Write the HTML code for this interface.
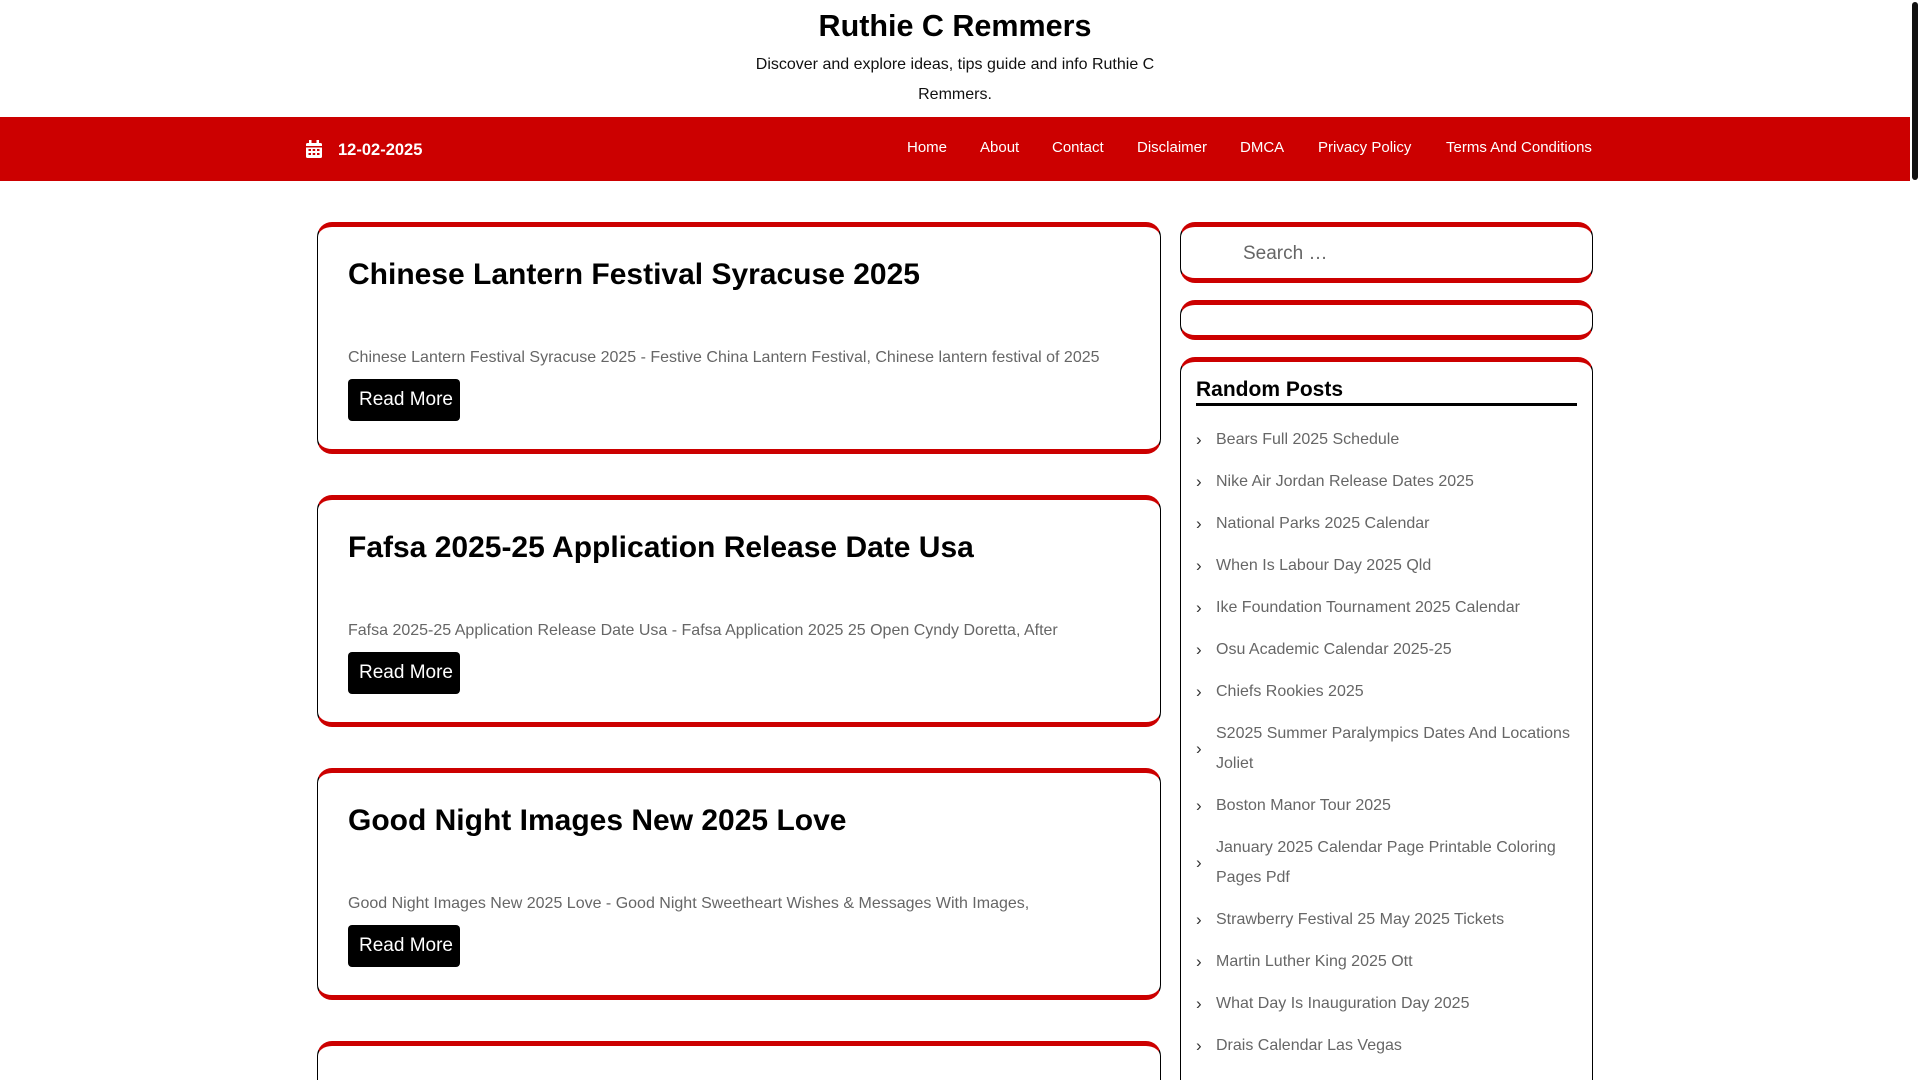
<!DOCTYPE html>
<html><head><meta charset="utf-8"><style>
*{margin:0;padding:0;box-sizing:border-box}
html,body{width:1920px;height:1080px;overflow:hidden;background:#fff;font-family:"Liberation Sans",Arial,sans-serif}
#wrap{position:relative;width:1920px;height:1080px;overflow:hidden}
.abs{position:absolute}
.title{left:0;width:1910px;top:9px;text-align:center;font-size:30.5px;font-weight:bold;color:#000}
.tag{left:740px;width:430px;top:50px;text-align:center;font-size:16px;line-height:30px;color:#111}
.nav{left:0;top:117px;width:1910px;height:64px;background:#cc0000}
.date{left:338px;top:141px;color:#fff;font-weight:bold;font-size:16.5px}
.navl{top:139px;color:#fff;font-size:15px}
.card{left:317px;width:844px;border:1px solid #000;border-top:5px solid #cc0000;border-bottom:5px solid #cc0000;border-radius:15px;background:#fff}
.card h2{position:absolute;left:30px;top:31px;font-size:30px;color:#000}
.card p{position:absolute;left:30px;top:122px;font-size:16px;color:#666;white-space:nowrap}
.card a{position:absolute;left:30px;top:152px;width:112px;height:42px;background:#000;color:#fff;border-radius:4px;font-size:19px;text-align:center;line-height:42px;text-decoration:none;padding-left:4px}
.side{left:1180px;width:413px;border:1px solid #000;border-top:5px solid #cc0000;border-bottom:5px solid #cc0000;border-radius:15px;background:#fff}
ul{list-style:none;margin-top:13px}
li{position:relative;padding:6px 0 6px 20px;font-size:16px;line-height:30px;color:#666}
li:before{content:"›";position:absolute;left:0;top:50%;transform:translateY(-50%);color:#333;font-size:17px}
</style></head><body><div id="wrap">
<div class="abs title">Ruthie C Remmers</div>
<div class="abs tag">Discover and explore ideas, tips guide and info Ruthie C Remmers.</div>
<div class="abs nav"></div>
<svg class="abs" style="left:306px;top:140px" width="16" height="18" viewBox="0 0 16 18"><rect x="0" y="3" width="16" height="15" rx="1.5" fill="#fff"/><rect x="3" y="0" width="2.5" height="5" fill="#fff"/><rect x="10.5" y="0" width="2.5" height="5" fill="#fff"/><g fill="#cc0000"><rect x="0" y="6" width="16" height="1.5"/><rect x="2.5" y="9" width="2.5" height="2"/><rect x="6.7" y="9" width="2.5" height="2"/><rect x="11" y="9" width="2.5" height="2"/><rect x="2.5" y="13" width="2.5" height="2"/><rect x="6.7" y="13" width="2.5" height="2"/><rect x="11" y="13" width="2.5" height="2"/></g></svg>
<div class="abs date">12-02-2025</div>
<div class="abs navl" style="left:907px">Home</div>
<div class="abs navl" style="left:980px">About</div>
<div class="abs navl" style="left:1052px">Contact</div>
<div class="abs navl" style="left:1137px">Disclaimer</div>
<div class="abs navl" style="left:1240px">DMCA</div>
<div class="abs navl" style="left:1318px">Privacy Policy</div>
<div class="abs navl" style="left:1446px">Terms And Conditions</div>
<div class="abs" style="left:1912px;top:2px;width:6px;height:178px;background:#111;border-radius:3px"></div>

<div class="abs card" style="top:222px;height:232px"><h2>Chinese Lantern Festival Syracuse 2025</h2><p>Chinese Lantern Festival Syracuse 2025 - Festive China Lantern Festival, Chinese lantern festival of 2025</p><a>Read More</a></div>
<div class="abs card" style="top:495px;height:232px"><h2>Fafsa 2025-25 Application Release Date Usa</h2><p>Fafsa 2025-25 Application Release Date Usa - Fafsa Application 2025 25 Open Cyndy Doretta, After</p><a>Read More</a></div>
<div class="abs card" style="top:768px;height:232px"><h2>Good Night Images New 2025 Love</h2><p>Good Night Images New 2025 Love - Good Night Sweetheart Wishes &amp; Messages With Images,</p><a>Read More</a></div>
<div class="abs card" style="top:1041px;height:39px;border-bottom:none;border-radius:15px 15px 0 0"></div>

<div class="abs side" style="top:222px;height:61px"><div class="abs" style="left:62px;top:16px;font-size:19px;color:#666">Search …</div></div>
<div class="abs side" style="top:300px;height:40px"></div>
<div class="abs side" style="top:357px;height:723px;padding:16px 15px 0 15px;border-bottom:none;border-radius:15px 15px 0 0;overflow:hidden">
<div style="font-size:21px;font-weight:bold;color:#000;padding-bottom:1px;border-bottom:3px solid #000">Random Posts</div>
<ul>
<li>Bears Full 2025 Schedule</li>
<li>Nike Air Jordan Release Dates 2025</li>
<li>National Parks 2025 Calendar</li>
<li>When Is Labour Day 2025 Qld</li>
<li>Ike Foundation Tournament 2025 Calendar</li>
<li>Osu Academic Calendar 2025-25</li>
<li>Chiefs Rookies 2025</li>
<li>S2025 Summer Paralympics Dates And Locations Joliet</li>
<li>Boston Manor Tour 2025</li>
<li>January 2025 Calendar Page Printable Coloring Pages Pdf</li>
<li>Strawberry Festival 25 May 2025 Tickets</li>
<li>Martin Luther King 2025 Ott</li>
<li>What Day Is Inauguration Day 2025</li>
<li>Drais Calendar Las Vegas</li>
</ul></div>
</div></body></html>
